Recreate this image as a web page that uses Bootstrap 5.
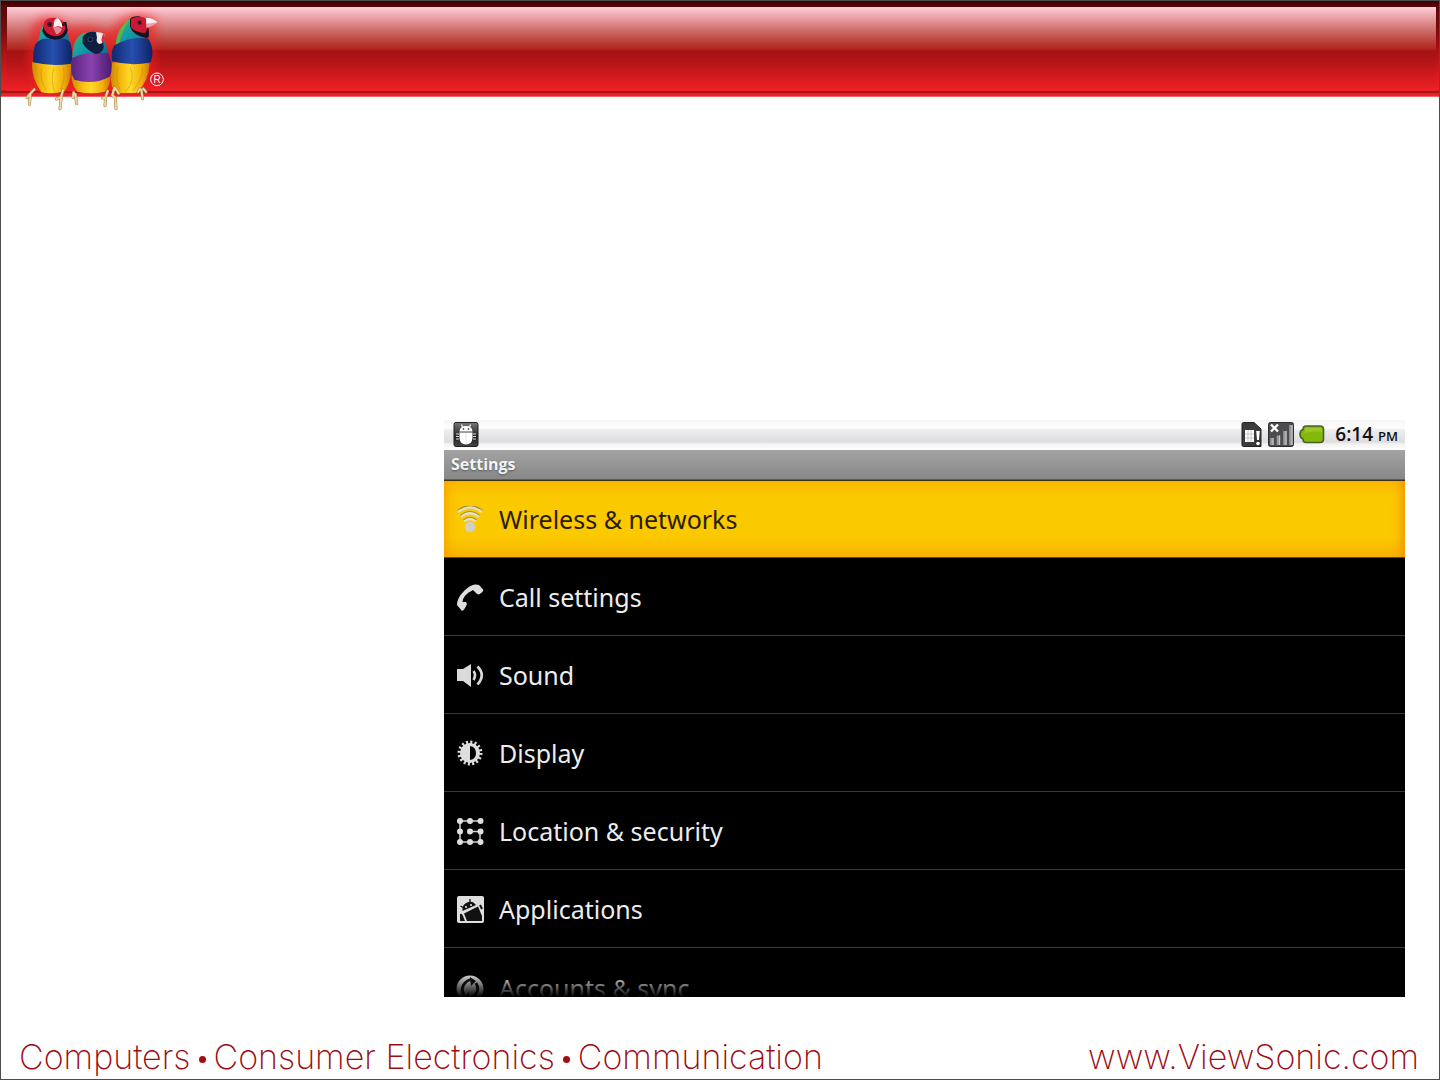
<!DOCTYPE html>
<html lang="en">
<head>
<meta charset="utf-8">
<meta name="viewport" content="width=device-width, initial-scale=1">
<title>ViewSonic – Settings</title>
<link href="https://cdn.jsdelivr.net/npm/bootstrap@5.3.0/dist/css/bootstrap.min.css" rel="stylesheet">
<style>
  .slide { border: 1px solid #4d4d4d; background: #fff; }
  .brand-bar {
    height: 96px; padding: 6px 3px 0 6px;
    background: linear-gradient(#3d0003 0, #5a0508 6px, #7d0b0f 30px, #a81115 50px, #ea1f25 86px, #ee2228 89px, #a91418 90px, #a91418 92px, #e51f25 92px, #ee2329 95px, #f7a3a5 96px);
  }
  .gloss {
    height: 84px;
    background: linear-gradient(#fcd0da 0, #f0abb2 8px, #d47c7b 20px, #b93a33 36px, #b0261f 42px, #a41114 44px, #b81518 57px, #df1d22 76px, #ee2228 84px);
  }
  .birds { left: 0; top: 0; width: 199px; height: 119px; }
  .stage { padding: 323px 34px 0; }
  .device { width: 961px; max-width: 100%; background: #000; font-family: "Noto Sans", "Open Sans", sans-serif; }
  .status { height: 30px; padding: 0 7px 0 8px; background: linear-gradient(#f6f6f7 0, #fdfdfd 8px, #ededf0 10px, #dedee1 22px, #f2f2f4 24px, #fff 30px); }
  .clock { font-family: "Open Sans", sans-serif; font-size: 19px; line-height: 32px; font-weight: 600; color: #111; }
  .clock span { font-size: 13px; }
  .title-strip { height: 31px; padding: 0 7px; line-height: 29px; font-size: 16px; font-weight: 700; color: #f4f4f4; background: linear-gradient(#a3a3a3, #888 29px, #3e3015 30px); text-shadow: 0 1px 2px #555; font-family: "Open Sans", sans-serif; }
  .device .entry { height: 78px; padding: 2px 12px 0; gap: 15px; font-size: 25px; line-height: 34px; color: #ededed; background: #000; border: 0; border-bottom: 1px solid #3a3a3a; border-radius: 0; }
  .entry span { padding-bottom: 2px; }
  .entry svg { width: 28px; height: 28px; flex: none; }
  .device .entry.chosen { height: 77px; color: #2a1c00; background: linear-gradient(#fbb900, #fbc900 16px, #fbc900 56px, #f8b300 76px); border-color: #6f4b00; box-shadow: inset -10px 0 12px -8px #f08a00, inset 10px 0 12px -8px #f5a000; }
  .device .entry.cut { height: 49px; padding-top: 23px; overflow: hidden; border: 0; align-items: flex-start; }
  .cut::after { content: ""; position: absolute; inset: 26px 0 0; background: linear-gradient(transparent, #000); }
  .tagline { padding: 40px 20px 2px 18px; font-family: Inter, sans-serif; font-weight: 200; font-size: 34px; line-height: 40px; color: #9c0c12; }
  .tagline a { color: inherit; }
  .dot { width: 7px; height: 7px; background: #a50c12; margin: 4px 8px 0; }
</style>
</head>
<body>
<div class="slide min-vh-100 d-flex flex-column">
  <header class="brand-bar position-relative">
    <div class="gloss"></div>
    <svg class="birds position-absolute" viewBox="3 3 597 357" role="img" aria-label="ViewSonic birds">
      <defs>
        <filter id="halo" x="-30%" y="-30%" width="160%" height="160%"><feGaussianBlur stdDeviation="14"/></filter>
        <linearGradient id="yel"><stop stop-color="#c98705"/><stop offset=".25" stop-color="#f5b70c"/><stop offset=".5" stop-color="#ffda2b"/><stop offset=".8" stop-color="#f2ae0a"/><stop offset="1" stop-color="#c97a05"/></linearGradient>
        <linearGradient id="blu"><stop stop-color="#10286e"/><stop offset=".5" stop-color="#2850b0"/><stop offset="1" stop-color="#0c2365"/></linearGradient>
        <linearGradient id="pur"><stop stop-color="#5a2381"/><stop offset=".5" stop-color="#8a43ae"/><stop offset="1" stop-color="#4b1a70"/></linearGradient>
        <linearGradient id="teal" x2="1" y2="1"><stop stop-color="#4ab35c"/><stop offset=".4" stop-color="#14a3a5"/><stop offset="1" stop-color="#0a5f91"/></linearGradient>
      </defs>
      <path d="M95 75Q155 20 210 85Q260 65 330 95Q390 10 470 60L460 230 400 270H110L85 180Z" fill="#f02024" opacity=".65" filter="url(#halo)"/>
      <!-- left bird -->
      <path d="M96 187Q94 235 124 277Q158 284 194 274Q218 235 213 185Z" fill="url(#yel)"/>
      <path d="M118 112Q122 62 160 55Q200 60 206 115L212 140H108Z" fill="url(#teal)"/>
      <path d="M106 132Q125 108 160 120Q195 108 211 128Q222 165 213 191Q155 201 100 187Q98 155 106 132Z" fill="url(#blu)"/>
      <path d="M127 92Q133 116 163 119Q198 120 203 91L199 66 135 65Z" fill="#111326"/>
      <path d="M130 78Q130 53 163 53Q192 54 196 83Q193 107 166 109Q134 105 130 78Z" fill="#d31832"/>
      <path d="M162 66Q166 53 174 55Q187 65 187 83L174 77 160 84Z" fill="#f8efee"/><path d="M160 85L174 79 186 88Q178 103 169 103Z" fill="#d9909a"/>
      <circle cx="149" cy="73" r="8" fill="#631424"/><circle cx="149" cy="73" r="4" fill="#16162a"/><circle cx="190" cy="74" r="4" fill="#271426"/>
      <path d="M161 205Q151 241 164 277M126 203Q115 234 139 271M190 202Q198 235 181 270" fill="none" stroke="#b87706" stroke-width="3" opacity=".4"/>
      <!-- right bird -->
      <path d="M337 187Q327 220 336 260L354 279H409Q446 246 449 190Z" fill="url(#yel)"/>
      <path d="M345 145Q352 74 395 54Q422 57 421 99L450 139Z" fill="url(#teal)"/>
      <path d="M346 144Q352 75 395 54Q365 90 358 130Z" fill="#61b347"/>
      <path d="M343 136Q391 107 446 116Q466 153 452 187Q391 200 336 183Q332 151 343 136Z" fill="url(#blu)"/>
      <path d="M390 58Q395 47 419 49L446 86 447 108Q445 116 437 114Q399 105 390 80Z" fill="#15131f"/>
      <path d="M393 58Q400 49 423 50Q442 52 447 76L436 99Q405 98 393 82Z" fill="#ce1832"/>
      <path d="M438 54Q456 53 473 67Q457 81 439 83Z" fill="#e7a4a6"/><path d="M438 54Q456 53 473 67L439 71Z" fill="#fff1ed"/>
      <circle cx="419" cy="68" r="7" fill="#651728"/><circle cx="419" cy="68" r="4" fill="#17162c"/>
      <path d="M391 203Q407 240 377 275M427 201Q431 235 399 271M355 200Q343 236 361 272" fill="none" stroke="#b87706" stroke-width="3" opacity=".4"/>
      <!-- middle bird -->
      <path d="M214 227Q216 256 232 275Q270 284 314 276Q334 257 331 222Z" fill="url(#yel)"/>
      <path d="M217 180Q216 117 248 100L287 94Q321 112 324 172Z" fill="url(#teal)"/>
      <path d="M217 174Q257 153 326 160Q343 203 329 230Q281 256 223 239Q207 210 217 174Z" fill="url(#pur)"/>
      <path d="M248 111Q258 94 284 95Q311 103 311 143Q306 161 287 162Q262 153 248 130Z" fill="#101e3f"/>
      <path d="M288 97Q307 95 315 106L306 130 298 132Q287 126 291 113Z" fill="#f0e9e5"/><path d="M309 101L315 107 308 130 304 120Z" fill="#df253c"/>
      <circle cx="271" cy="118" r="8" fill="#3d5a70"/><circle cx="271" cy="118" r="6" fill="#0a1226"/>
      <g fill="none" stroke-linecap="round" stroke-linejoin="round">
        <path stroke="#a87840" stroke-width="9" d="M103 268L88 284 81 293M91 284L88 313M189 270L183 292 169 297M184 290L180 326M221 277L219 292M226 282L230 311M323 273L316 294 308 294M317 292L315 317M343 264L337 286 346 293 348 326M345 264L356 280M420 267L414 276M424 269L428 296M430 266L438 276"/>
        <path stroke="#ecd9a6" stroke-width="6" d="M103 268L88 284 81 293M91 284L88 313M189 270L183 292 169 297M184 290L180 326M221 277L219 292M226 282L230 311M323 273L316 294 308 294M317 292L315 317M343 264L337 286 346 293 348 326M345 264L356 280M420 267L414 276M424 269L428 296M430 266L438 276"/>
      </g>
      <circle cx="471" cy="238" r="19" fill="none" stroke="#fff" stroke-width="3"/>
      <text x="471" y="249" text-anchor="middle" font-family="Liberation Sans, sans-serif" font-size="30" fill="#fff">R</text>
    </svg>
  </header>

  <main class="stage flex-grow-1">
    <section class="device ms-auto">
      <div class="status d-flex align-items-center">
        <svg class="me-auto" width="28" height="28" viewBox="0 0 28 28" aria-hidden="true">
          <defs><linearGradient id="tile" x2="0" y2="1"><stop stop-color="#777"/><stop offset=".6" stop-color="#222"/><stop offset="1" stop-color="#444"/></linearGradient></defs>
          <rect x="2" y="1.500" width="24" height="24" rx="2" fill="url(#tile)" stroke="#222"/>
          <path d="M7.500 10.500Q8 5 14 5T20.500 10.500ZM7.500 11.500H20.500V17Q20 23.500 14 23.500T7.500 17Z" fill="#fff"/>
          <path d="M10.500 6L9.500 3.500M17.500 6L18.500 3.500" stroke="#fff" stroke-width="1.200"/>
          <path d="M4 13H7M4 15.500H7M4 18H7M21 13H24M21 15.500H24M21 18H24" stroke="#ddd"/>
          <circle cx="11.500" cy="8" r=".9" fill="#555"/><circle cx="16.500" cy="8" r=".9" fill="#555"/><path d="M14 12V23" stroke="#ddd" stroke-width=".8"/>
        </svg>
        <svg width="92" height="28" viewBox="0 0 92 28" aria-hidden="true">
          <path d="M4.500 1.500H15L22 8V25.500H4.500Q3 25.500 3 24V3Q3 1.500 4.500 1.500Z" fill="#3b3b3b" stroke="#222"/>
          <path d="M6 9H15V21H6Z" fill="#fff"/><path d="M9 9V21M12 9V21M6 13H15M6 17H15" stroke="#bbb" stroke-width=".8"/>
          <path d="M16.500 10.500H20.500V24.500H16.500Z" fill="#333"/><path d="M17.200 10H20.800L20 19H18Z" fill="#fff"/><circle cx="19" cy="22.500" r="1.800" fill="#fff"/>
          <rect x="29.500" y="1.500" width="25" height="24" rx="2" fill="#4d4a50" stroke="#2d2d2d"/>
          <path d="M33 17V24M39.500 14.500V24M46 10V24M52 4V24" stroke="#9b9a9e" stroke-width="3.600"/><path d="M34 17V24M40.500 14.500V24M47 10V24M53 4V24" stroke="#c4c4c6" stroke-width="1"/>
          <path d="M32 3.500L39 10.500M39 3.500L32 10.500" stroke="#fff" stroke-width="2.400"/>
          <path d="M67 5H81Q84.500 5 84.500 8V18Q84.500 21.500 81 21.500H67Q64 21.500 64 18Q61 17 61 13.200T64 8.500Q64 5 67 5Z" fill="#84b90c" stroke="#4c5f26" stroke-width="1.600"/><path d="M66 7H83V11Q75 9 66 12Z" fill="#9bc828"/>
        </svg>
        <div class="clock ms-1">6:14 <span>PM</span></div>
      </div>
      <h1 class="title-strip m-0">Settings</h1>
      <nav class="list-group rounded-0" aria-label="Settings">
        <a href="#wireless" class="list-group-item entry chosen d-flex align-items-center">
          <svg viewBox="0 0 28 28" aria-hidden="true"><g fill="none" stroke="#a08a3c" stroke-width="2.600"><path d="M2 5Q14-4 26 5M5 10Q14 2.500 23 10M8 14.500Q14 9.500 20 14.500"/></g><g fill="none" stroke="#e8e0b8" stroke-width="2.200"><path d="M2 6Q14-3 26 6M5 11Q14 3.500 23 11M8 15.500Q14 10.500 20 15.500"/></g><circle cx="14" cy="21" r="5.300" fill="#d2d0c4"/></svg>
          <span>Wireless &amp; networks</span></a>
        <a href="#call" class="list-group-item entry d-flex align-items-center">
          <svg viewBox="0 0 28 28" aria-hidden="true"><path d="M6 27L1 21Q1 14 8 7T20 .5L23 1 27.500 6Q27 8 23 10.500L21 10 17 6Q7 11 6.500 18L10 18 11 20Q8.500 26 6 27Z" fill="#dedede"/></svg>
          <span>Call settings</span></a>
        <a href="#sound" class="list-group-item entry d-flex align-items-center">
          <svg viewBox="0 0 28 28" aria-hidden="true"><path d="M1 7H7L15 2V25L7 19H1Z" fill="#dadada"/><path d="M17.500 9Q20.500 13 17.500 18M21.500 4.500Q30 13 21.500 22.500" fill="none" stroke="#dadada" stroke-width="2.600"/></svg>
          <span>Sound</span></a>
        <a href="#display" class="list-group-item entry d-flex align-items-center">
          <svg viewBox="0 0 28 28" aria-hidden="true"><circle cx="14" cy="13" r="10.700" fill="none" stroke="#dedede" stroke-width="3.600" stroke-dasharray="2 2.200"/><circle cx="14" cy="13" r="10" fill="#dedede"/><path d="M14 6Q20 7 20 13T14 20Z" fill="#000"/></svg>
          <span>Display</span></a>
        <a href="#location" class="list-group-item entry d-flex align-items-center">
          <svg viewBox="0 0 28 28" aria-hidden="true"><path d="M24 3H4V13.500M4 13.500V24H24V13.500H14" fill="none" stroke="#cfcfcf" stroke-width="1.500"/><g fill="#dedede"><circle cx="4" cy="3" r="3"/><circle cx="14" cy="3" r="3"/><circle cx="24.500" cy="3" r="3"/><circle cx="4" cy="13.500" r="3"/><circle cx="14" cy="13.500" r="3"/><circle cx="24.500" cy="13.500" r="3"/><circle cx="4" cy="24" r="3"/><circle cx="14" cy="24" r="3"/><circle cx="24.500" cy="24" r="3"/></g></svg>
          <span>Location &amp; security</span></a>
        <a href="#applications" class="list-group-item entry d-flex align-items-center">
          <svg viewBox="0 0 28 28" aria-hidden="true"><rect x="1" y="0" width="27" height="27" rx="2" fill="#dedede"/><path d="M6.500 15Q5.500 9 11 6.500T20 9ZM8 17.500L22 10.500L26 20V25H11ZM4 18Q6 17 7 20L9 25H4Z" fill="#111"/><path d="M14 3V7M4.500 10L8 12" stroke="#111" stroke-width="1.300"/><circle cx="10" cy="11" r="1" fill="#eee"/><circle cx="15" cy="9" r="1" fill="#eee"/><path d="M24 9L26 13" stroke="#111" stroke-width="2"/></svg>
          <span>Applications</span></a>
        <a href="#accounts" class="list-group-item entry cut d-flex">
          <svg viewBox="0 0 28 28" class="mt-1" aria-hidden="true"><circle cx="14" cy="14" r="13.500" fill="#dedede"/><path d="M8 20Q4 13 9 8T16 6M20 8Q24 15 19 20T12 22" fill="none" stroke="#111" stroke-width="2.800"/><path d="M14 2L20 6 15 11ZM14 26L8 22 13 17Z" fill="#111"/></svg>
          <span>Accounts &amp; sync</span></a>
      </nav>
    </section>
  </main>

  <footer class="tagline d-flex flex-wrap justify-content-between">
    <div class="d-flex flex-wrap align-items-center">
      <span>Computers</span><i class="dot rounded-circle"></i><span>Consumer Electronics</span><i class="dot rounded-circle"></i><span>Communication</span>
    </div>
    <a class="text-decoration-none" href="#viewsonic">www.ViewSonic.com</a>
  </footer>
</div>
<script src="https://cdn.jsdelivr.net/npm/bootstrap@5.3.0/dist/js/bootstrap.bundle.min.js"></script>
</body>
</html>
